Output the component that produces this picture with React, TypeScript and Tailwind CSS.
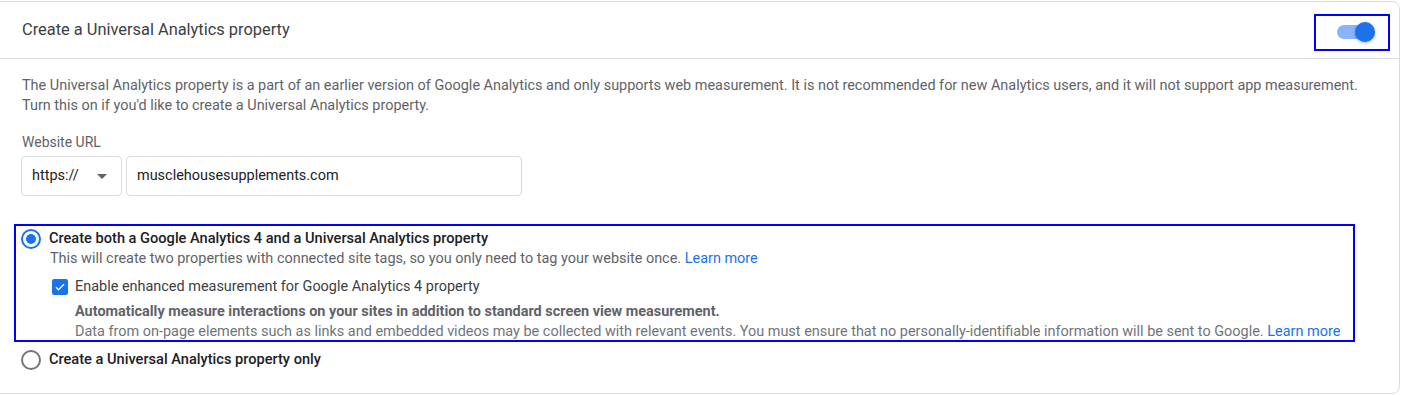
import React, { useState } from 'react';

// Universal Analytics property settings card
const App: React.FC = () => {
  const [enabled, setEnabled] = useState(true);
  const [choice, setChoice] = useState<'both' | 'ua'>('both');
  const [enhanced, setEnhanced] = useState(true);

  return (
    <div className="w-[1403px] h-[395px] bg-white overflow-hidden font-['Roboto',sans-serif] text-[#3c4043]">
      <div className="ml-[-8px] mt-px w-[1408px] h-[393px] border border-[#dadce0] rounded-lg bg-white">
        {/* header */}
        <div className="h-[57px] flex items-center justify-between pl-[29px] pr-[9px] border-b border-[#dadce0]">
          <span className="text-[16.4px] text-[#3c4043]">Create a Universal Analytics property</span>
          <div className="w-[76px] h-[37px] mt-[4px] border-2 border-[#0000ff] flex items-center justify-end pr-[17px]">
            <button
              onClick={() => setEnabled(!enabled)}
              className="relative w-[34px] h-[14px] rounded-full bg-[#8ab4f8]"
            >
              <span className="absolute right-[-4px] top-[-3px] w-[20px] h-[20px] rounded-full bg-[#1a73e8] shadow-[0_1px_3px_rgba(0,0,0,0.35)]" />
            </button>
          </div>
        </div>

        {/* body */}
        <div className="pl-[29px] pt-[17px] text-[14.45px]">
          <p className="leading-[20px] text-[#5f6368] pr-[20px]">
            The Universal Analytics property is a part of an earlier version of Google Analytics and only supports web measurement. It is not recommended for new Analytics users, and it will not support app measurement. Turn this on if you'd like to create a Universal Analytics property.
          </p>

          <div className="mt-[16px] text-[14px] text-[#5f6368]">Website URL</div>
          <div className="mt-[3px] ml-[-1px] flex gap-[4px]">
            <div className="w-[101px] h-[40px] border border-[#dadce0] rounded flex items-center justify-between pl-[10px] pr-[14px]">
              <span className="text-[#202124]">https://</span>
              <svg width="10" height="5" viewBox="0 0 10 5"><path d="M0 0L5 5L10 0Z" fill="#5f6368" /></svg>
            </div>
            <div className="w-[396px] h-[40px] border border-[#dadce0] rounded flex items-center pl-[10px]">
              <span className="text-[#202124]">musclehousesupplements.com</span>
            </div>
          </div>

          {/* option: both */}
          <div className="mt-[28px] ml-[-8px] w-[1341px] h-[118px] border-2 border-[#0000ff] pl-[5px] pt-[2px]">
            <div className="flex items-center h-[22px] cursor-pointer" onClick={() => setChoice('both')}>
              <span className="w-[20px] h-[20px] rounded-full border-2 border-[#1a73e8] flex items-center justify-center">
                {choice === 'both' && <span className="w-[10px] h-[10px] rounded-full bg-[#1a73e8]" />}
              </span>
              <span className="ml-[8px] text-[14.6px] font-medium text-[#202124]">Create both a Google Analytics 4 and a Universal Analytics property</span>
            </div>
            <p className="ml-[29px] leading-[20px] text-[#5f6368] mt-[-1px]">
              This will create two properties with connected site tags, so you only need to tag your website once. <span className="text-[#1a73e8]">Learn more</span>
            </p>
            <div className="ml-[31px] mt-[9px] flex items-start">
              <button
                onClick={() => setEnhanced(!enhanced)}
                className="w-[16px] h-[16px] mt-[1px] rounded-[2px] bg-[#1a73e8] flex items-center justify-center"
              >
                {enhanced && (
                  <svg width="12" height="12" viewBox="0 0 24 24"><path d="M4 12.5l5 5L20 6.5" stroke="#fff" strokeWidth="2.6" fill="none" /></svg>
                )}
              </button>
              <div className="ml-[7px]">
                <div className="leading-[18px] text-[#3c4043]">Enable enhanced measurement for Google Analytics 4 property</div>
                <div className="mt-[6px] leading-[20px] font-bold text-[#5f6368]">Automatically measure interactions on your sites in addition to standard screen view measurement.</div>
                <div className="leading-[20px] text-[#70757a]">
                  Data from on-page elements such as links and embedded videos may be collected with relevant events. You must ensure that no personally-identifiable information will be sent to Google. <span className="text-[#1a73e8]">Learn more</span>
                </div>
              </div>
            </div>
          </div>

          {/* option: UA only */}
          <div className="mt-[6px] ml-[-1px] flex items-center h-[24px] cursor-pointer" onClick={() => setChoice('ua')}>
            <span className="w-[20px] h-[20px] rounded-full border-2 border-[#757575] flex items-center justify-center">
              {choice === 'ua' && <span className="w-[10px] h-[10px] rounded-full bg-[#1a73e8]" />}
            </span>
            <span className="ml-[8px] text-[14.6px] font-medium text-[#202124]">Create a Universal Analytics property only</span>
          </div>
        </div>
      </div>
    </div>
  );
};

export default App;
